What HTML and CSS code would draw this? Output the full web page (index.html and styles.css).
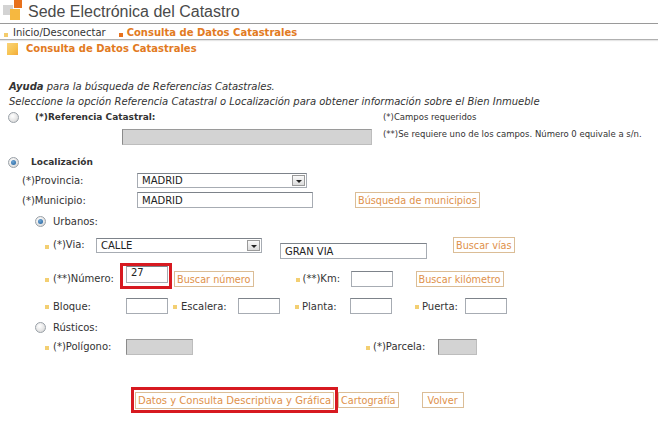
FILE: index.html
```html
<!DOCTYPE html>
<html lang="es">
<head>
<meta charset="utf-8">
<title>Sede Electrónica del Catastro</title>
<link rel="stylesheet" href="styles.css">
</head>
<body>
<div class="page">
  <header class="top">
    <svg class="logo" width="24" height="22" viewBox="0 0 24 22">
      <rect x="3" y="5" width="10" height="10" fill="#d3d3d3"/>
      <rect x="14" y="0" width="8" height="8" fill="#e8711c"/>
      <rect x="10" y="9" width="10" height="11" fill="#f6b840"/>
    </svg>
    <span class="site">Sede Electrónica del Catastro</span>
  </header>
  <nav class="nav">
    <span class="dot light"></span><a class="navlink">Inicio/Desconectar</a>
    <span class="dot orange"></span><a class="navlink cur">Consulta de Datos Catastrales</a>
  </nav>
  <div class="section">
    <span class="secicon"></span><span class="sectitle">Consulta de Datos Catastrales</span>
  </div>

  <form class="form">
    <div class="row r-help"><p><b>Ayuda</b> para la búsqueda de Referencias Catastrales.</p></div>
    <div class="row r-help"><p>Seleccione la opción Referencia Catastral o Localización para obtener información sobre el Bien Inmueble</p></div>

    <div class="row r-ref">
      <span class="radio"></span>
      <span class="lbl-ref"><b>(*)Referencia Catastral:</b></span>
      <span class="note">(*)Campos requeridos</span>
    </div>
    <div class="row r-refin">
      <span class="in dis w-ref"></span>
      <span class="note">(**)Se requiere uno de los campos. Número 0 equivale a s/n.</span>
    </div>

    <div class="row r-loc">
      <span class="radio on"></span>
      <span class="lbl-loc"><b>Localización</b></span>
    </div>
    <div class="row r-prov">
      <span class="lbl-l1">(*)Provincia:</span>
      <span class="sel w-prov"><span class="val">MADRID</span><span class="arrow"></span></span>
    </div>
    <div class="row r-mun">
      <span class="lbl-l1">(*)Municipio:</span>
      <span class="in w-mun"><span class="val">MADRID</span></span>
      <span class="btn b-mun">Búsqueda de municipios</span>
    </div>
    <div class="row r-urb">
      <span class="radio on sub"></span>
      <span>Urbanos:</span>
    </div>
    <div class="row r-via">
      <span class="bul"></span><span class="lbl-via">(*)Via:</span>
      <span class="sel w-via"><span class="val">CALLE</span><span class="arrow"></span></span>
      <span class="in w-calle"><span class="val">GRAN VIA</span></span>
      <span class="btn b-vias">Buscar vías</span>
    </div>
    <div class="row r-num">
      <span class="bul"></span><span class="lbl lbl-num">(**)Número:</span>
      <span class="redbox small"><span class="in w-num"><span class="val">27</span></span></span>
      <span class="btn b-num">Buscar número</span>
      <span class="bul b-km"></span><span class="lbl lbl-kmn">(**)Km:</span>
      <span class="in w-sm"></span>
      <span class="btn b-kilo">Buscar kilómetro</span>
    </div>
    <div class="row r-blq">
      <span class="bul"></span><span class="lbl-num">Bloque:</span>
      <span class="in w-sm"></span>
      <span class="bul b-esc"></span><span class="lbl-esc">Escalera:</span>
      <span class="in w-sm"></span>
      <span class="bul b-pla"></span><span class="lbl-km">Planta:</span>
      <span class="in w-sm"></span>
      <span class="bul b-pue"></span><span class="lbl-pue">Puerta:</span>
      <span class="in w-sm"></span>
    </div>
    <div class="row r-rus">
      <span class="radio sub"></span>
      <span>Rústicos:</span>
    </div>
    <div class="row r-pol">
      <span class="bul"></span><span class="lbl-num">(*)Polígono:</span>
      <span class="in dis w-pol"></span>
      <span class="bul b-par"></span><span class="lbl-par">(*)Parcela:</span>
      <span class="in dis w-par"></span>
    </div>
    <div class="row r-btns">
      <span class="redbox big"><span class="btn">Datos y Consulta Descriptiva y Gráfica</span></span>
      <span class="btn b-car">Cartografía</span>
      <span class="btn b-vol">Volver</span>
    </div>
  </form>
</div>
</body>
</html>
```

FILE: styles.css
```css
* { box-sizing: border-box; }
html, body { margin: 0; padding: 0; background: #fff; }
body {
  font-family: "DejaVu Sans", Verdana, sans-serif;
  font-size: 10px;
  color: #333;
}
.page { width: 658px; height: 421px; overflow: hidden; }

.top {
  display: flex;
  align-items: flex-end;
  height: 24px;
  border-bottom: 1px solid #9a9a9a;
}
.logo { margin-bottom: 1px; display: block; }
.site {
  font-family: "Liberation Sans", Arial, sans-serif;
  font-size: 16px;
  color: #4a4a4a;
  margin-left: 4px;
  line-height: 20px;
  margin-bottom: 1px;
}

.nav {
  display: flex;
  align-items: center;
  height: 16px;
  padding-top: 2px;
  border-bottom: 1px solid #b0b0b0;
  box-shadow: 0 1px 1px #e6e6e6;
}
.dot { width: 4px; height: 4px; display: inline-block; margin-top: 4px; }
.dot.light { background: #f4cc6c; margin-left: 4px; margin-right: 5px; }
.dot.orange { background: #e8711c; margin-left: 13px; margin-right: 4px; }
.navlink { color: #333; }
.navlink.cur { color: #e27a22; font-weight: bold; }

.section {
  display: flex;
  align-items: center;
  height: 17px;
}
.secicon {
  width: 11px; height: 12px;
  margin-left: 7px; margin-right: 8px;
  background: linear-gradient(135deg, #f9d37a 0%, #f7c24f 60%, #f3a93a 100%);
}
.sectitle { color: #e27a22; font-weight: bold; }

.form { margin: 0; }
.row { display: flex; align-items: center; white-space: nowrap; }
.row p { margin: 0; font-style: italic; padding-left: 9px; }
.r-help { height: 15px; }
.r-help:first-child { margin-top: 22px; }
.r-ref { height: 16px; }
.r-refin { height: 16px; margin-top: 4px; align-items: flex-start; }
.r-loc { height: 16px; margin-top: 9px; }
.r-prov { height: 17px; margin-top: 2px; }
.r-mun { height: 18px; margin-top: 2px; }
.r-urb { height: 16px; margin-top: 4px; }
.r-via { height: 24px; margin-top: 7px; align-items: flex-start; }
.r-num { height: 26px; margin-top: 3px; align-items: flex-start; }
.r-blq { height: 18px; margin-top: 8px; }
.r-rus { height: 16px; margin-top: 4px; }
.r-pol { height: 17px; margin-top: 3px; }
.r-btns { height: 26px; margin-top: 32px; }

.radio {
  width: 11px; height: 11px; border-radius: 50%;
  border: 1px solid #9aa1a8;
  background: radial-gradient(circle at 40% 35%, #ffffff 0%, #e4e4e4 60%, #c9c9c9 100%);
  margin-left: 8px;
  display: inline-block;
  flex: none;
  position: relative;
}
.radio.on::after {
  content: "";
  position: absolute; left: 2px; top: 2px;
  width: 5px; height: 5px; border-radius: 50%;
  background: radial-gradient(circle at 40% 35%, #6fa6d6 0%, #1f5f9a 100%);
}
.radio.sub { margin-left: 35px; margin-right: 7px; }
.lbl-ref { margin-left: 16px; width: 348px; font-size: 9px; }
.lbl-loc { margin-left: 12px; font-size: 9px; }
.note { font-size: 8.5px; color: #333; }
.r-refin .note { margin-left: 11px; }
.lbl-l1 { margin-left: 22px; width: 115px; }

.in, .sel {
  display: inline-flex;
  align-items: center;
  height: 16px;
  border: 1px solid #a7acb3;
  border-top-color: #7d838a;
  background: #fff;
  flex: none;
}
.val { padding-left: 4px; color: #222; }
.in.dis { background: #d3d3d3; border-color: #bdbdbd; border-left-color: #8a8a8a; border-top-color: #9a9a9a; }
.w-ref { width: 250px; margin-left: 122px; }
.w-prov { width: 170px; height: 15px; justify-content: space-between; }
.w-mun { width: 176px; }
.w-via { width: 166px; height: 15px; justify-content: space-between; margin-top: 2px; }
.w-calle { width: 147px; margin-left: 18px; margin-top: 7px; }
.w-sm { width: 42px; }
.w-num { width: 42px; height: 17px; align-items: flex-start; }
.w-pol { width: 67px; }
.w-par { width: 39px; }

.arrow {
  width: 13px; height: 11px;
  margin-right: 1px;
  border: 1px solid #9a9a9a;
  background: linear-gradient(#fafafa, #dcdcdc);
  position: relative;
}
.arrow::after {
  content: "";
  position: absolute; left: 3px; top: 4px;
  border-left: 3px solid transparent;
  border-right: 3px solid transparent;
  border-top: 3px solid #222;
}

.btn {
  display: inline-flex;
  align-items: center;
  height: 16px;
  padding: 0 2px;
  border: 1px solid #dbbd96;
  color: #e0914a;
  background: #fff;
  flex: none;
  font-size: 9.7px;
}
.b-mun { margin-left: 42px; }
.b-vias { margin-left: 26px; margin-top: 1px; }
.b-kilo { margin-left: 23px; }
.b-car { padding: 0 2px; }
.b-vol { margin-left: 23px; padding: 0 5px; }

.bul { width: 4px; height: 4px; background: #f3cf72; margin-left: 45px; margin-right: 4px; flex: none; margin-top: 2px; }
.r-via .bul { margin-top: 9px; }
.lbl-via { width: 43px; margin-top: 3px; }
.lbl-num { width: 73px; }

.r-num .bul { margin-top: 15px; }
.r-num .lbl { margin-top: 10px; }
.r-num .btn, .r-num > .in { margin-top: 8px; }
.b-num { margin-left: 2px; }
.b-km { margin-left: 42px; margin-right: 3px; }
.lbl-kmn { width: 48px; }

.lbl-km { width: 48px; }
.b-esc { margin-left: 5px; }
.lbl-esc { width: 57px; }
.b-pla { margin-left: 15px; margin-right: 3px; }
.b-pue { margin-left: 23px; margin-right: 3px; }
.lbl-pue { width: 43px; }
.b-par { margin-left: 173px; margin-right: 3px; }
.lbl-par { width: 65px; }

.redbox { display: inline-flex; border: 3px solid #d71920; flex: none; }
.redbox.small { width: 52px; height: 26px; padding: 0 0 0 3px; margin-left: -6px; align-items: flex-start; }
.redbox.big { margin-left: 131px; width: 207px; height: 26px; padding: 2px 1px 0; align-items: flex-start; }
.redbox.big .btn { height: 17px; font-size: 10px; }
```
